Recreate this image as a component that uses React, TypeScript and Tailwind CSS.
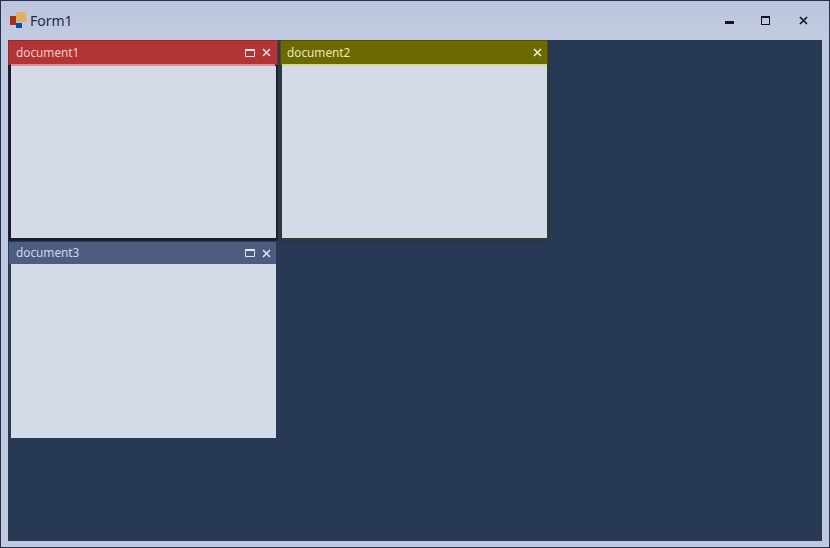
import React from 'react';

const font = { fontFamily: '"Noto Sans", "Open Sans", sans-serif' };

const RestoreIcon = () => (
  <svg width="10" height="8" viewBox="0 0 10 8" className="block">
    <path d="M0.5 1.5h9v6h-9z" fill="none" stroke="currentColor" strokeWidth="1" />
    <path d="M0 0.7h10" stroke="currentColor" strokeWidth="1.4" />
  </svg>
);

const CloseIcon = () => (
  <svg width="9" height="9" viewBox="0 0 9 9" className="block">
    <path d="M1 1l7 7M8 1l-7 7" stroke="currentColor" strokeWidth="1.5" fill="none" />
  </svg>
);

const DocWindow: React.FC<{
  title: string;
  outer: string;
  header: string;
  line?: string;
  text: string;
  icons: string;
  body: string;
  showRestore?: boolean;
}> = ({ title, outer, header, line, text, icons, body, showRestore = true }) => (
  <div className={`flex flex-col w-[268px] h-[199px] ${outer}`}>
    <div className={`relative shrink-0 flex items-center ${header}`}>
      <span className={`text-[11.8px] leading-none flex-1 ${text}`}>{title}</span>
      <div className={`flex items-center gap-[7px] ${icons}`}>
        {showRestore && <RestoreIcon />}
        <CloseIcon />
      </div>
    </div>
    {line && <div className={`relative h-[2px] shrink-0 ${line}`} />}
    <div className={`relative flex-1 bg-[#d5dae8] ${body}`} />
  </div>
);

export default function App() {
  return (
    <div
      className="w-[830px] h-[548px] flex flex-col overflow-hidden border border-[#23324e] bg-[#c1c9e0]"
      style={font}
    >
      <div className="h-[39px] shrink-0 flex items-center bg-gradient-to-b from-[#bcc5dc] to-[#c3cbe2]">
        <svg width="18" height="18" viewBox="0 0 18 18" className="ml-[9px] mr-[2px]">
          <rect x="0" y="4" width="6" height="9" fill="#a5301e" />
          <rect x="6" y="0" width="10" height="10" fill="#e0b068" />
          <rect x="6" y="11" width="6" height="5" fill="#0f4c96" />
        </svg>
        <span className="text-[14px] leading-none text-[#1c2b48]">Form1</span>
        <div className="ml-auto mr-[8px] flex items-center text-[#0d1526]">
          <div className="w-[36px] flex justify-center pt-[3px]">
            <div className="w-[9px] h-[3px] bg-[#0d1526]" />
          </div>
          <div className="w-[36px] flex justify-center">
            <div className="w-[9px] h-[9px] border border-[#0d1526] border-t-2" />
          </div>
          <div className="w-[38px] pl-[2px] flex justify-center">
            <svg width="9" height="9" viewBox="0 0 9 9" className="block">
              <path d="M1 1l7 7M8 1l-7 7" stroke="currentColor" strokeWidth="1.7" fill="none" />
            </svg>
          </div>
        </div>
      </div>
      <div className="flex-1 mx-[7px] mb-[6px] bg-[#283955] pt-px pl-px">
        <div className="grid grid-cols-[268px_268px] gap-x-[4px] gap-y-[1px] w-max">
          <DocWindow
            title="document1"
            outer="bg-[#1a1b26] shadow-[0_0_0_1px_#1f2233]"
            header="h-[23px] pl-[7px] pr-[6px] bg-[#b23434] shadow-[0_0_0_1px_#8f2a2c]"
            line="mx-[2px] bg-[#e38b92]"
            text="text-[#f3c9c9]"
            icons="text-[#f0e0e4]"
            body="ml-[2px] mr-[1px] mb-[2px]"
          />
          <DocWindow
            title="document2"
            outer="bg-[#2f3d30] shadow-[0_0_0_1px_#2a3635]"
            header="h-[23px] mr-[2px] pl-[6px] pr-[5px] bg-[#6b6a00] shadow-[0_0_0_1px_#4c4f10]"
            line="ml-[1px] mr-[2px] bg-[#d5d98a]"
            text="text-[#e6e6b8]"
            icons="text-[#f1f1d8]"
            body="ml-[1px] mr-[2px] mb-[2px]"
            showRestore={false}
          />
          <DocWindow
            title="document3"
            outer="bg-[#283955]"
            header="h-[22px] mt-[1px] mr-[1px] pl-[7px] pr-[5px] bg-[#4c5d80]"
            text="text-[#cfd8ea]"
            icons="text-[#dfe5f1]"
            body="ml-[2px] mr-[1px] mb-[2px]"
          />
        </div>
      </div>
    </div>
  );
}
